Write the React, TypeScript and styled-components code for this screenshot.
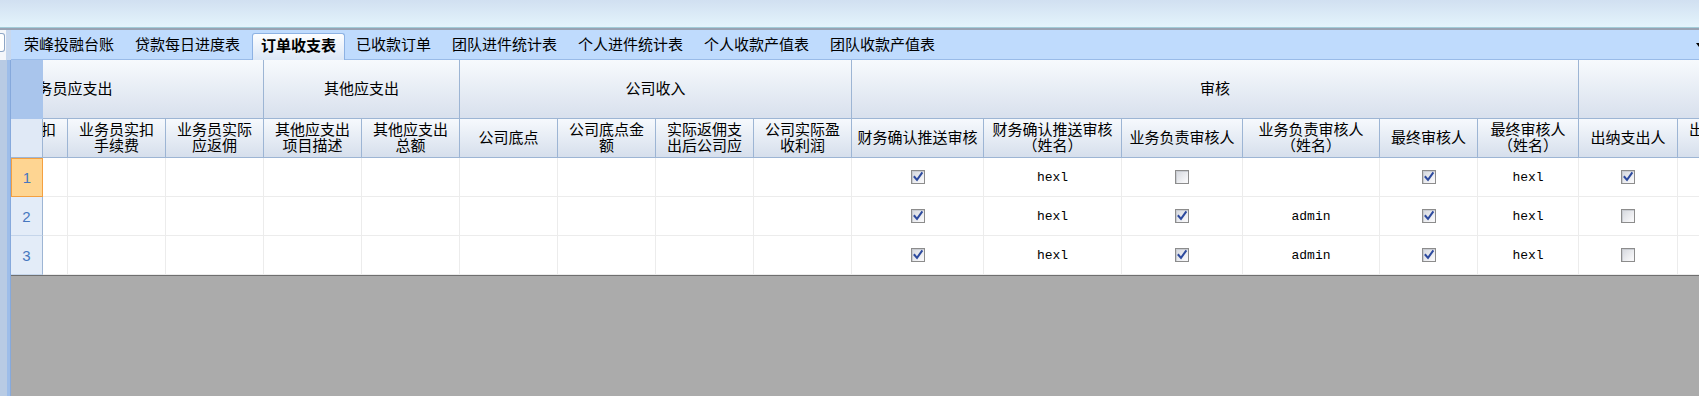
import * as React from 'react';
import styled, { createGlobalStyle } from 'styled-components';

const GlobalStyle = createGlobalStyle`
  html, body { margin: 0; padding: 0; overflow: hidden; }
  body {
    font-family: "Noto Sans CJK SC", "Liberation Sans", sans-serif;
    font-size: 15px;
    color: #000;
  }
`;

type Col = { w: number; label: string[]; key?: string };
type Group = { label: string; from: number; to: number };
type RowData = Record<string, boolean | string>;

const COLS: Col[] = [
  { w: 98, label: ['业务员应收', '手续费'] },
  { w: 98, label: ['业务员应扣', '手续费'] },
  { w: 98, label: ['业务员实扣', '手续费'] },
  { w: 98, label: ['业务员实际', '应返佣'] },
  { w: 98, label: ['其他应支出', '项目描述'] },
  { w: 98, label: ['其他应支出', '总额'] },
  { w: 98, label: ['公司底点'] },
  { w: 98, label: ['公司底点金', '额'] },
  { w: 98, label: ['实际返佣支', '出后公司应'] },
  { w: 98, label: ['公司实际盈', '收利润'] },
  { w: 132, label: ['财务确认推送审核'], key: 'finCheck' },
  { w: 138, label: ['财务确认推送审核', '（姓名）'], key: 'finName' },
  { w: 121, label: ['业务负责审核人'], key: 'bizCheck' },
  { w: 137, label: ['业务负责审核人', '（姓名）'], key: 'bizName' },
  { w: 98, label: ['最终审核人'], key: 'finalCheck' },
  { w: 101, label: ['最终审核人', '（姓名）'], key: 'finalName' },
  { w: 99, label: ['出纳支出人'], key: 'cashCheck' },
  { w: 98, label: ['出纳支出人', '（姓名）'], key: 'cashName' },
  { w: 98, label: ['出纳支出', '时间'] },
];

const GROUPS: Group[] = [
  { label: '业务员应支出', from: 0, to: 3 },
  { label: '其他应支出', from: 4, to: 5 },
  { label: '公司收入', from: 6, to: 9 },
  { label: '审核', from: 10, to: 15 },
  { label: '出纳', from: 16, to: 18 },
];

const ROWS: RowData[] = [
  { finCheck: true, finName: 'hexl', bizCheck: false, bizName: '', finalCheck: true, finalName: 'hexl', cashCheck: true },
  { finCheck: true, finName: 'hexl', bizCheck: true, bizName: 'admin', finalCheck: true, finalName: 'hexl', cashCheck: false },
  { finCheck: true, finName: 'hexl', bizCheck: true, bizName: 'admin', finalCheck: true, finalName: 'hexl', cashCheck: false },
];

const TABS = ['荣峰投融台账', '贷款每日进度表', '订单收支表', '已收款订单', '团队进件统计表', '个人进件统计表', '个人收款产值表', '团队收款产值表'];
const ACTIVE_TAB = 2;

const Page = styled.div`
  display: flex;
  flex-direction: column;
  width: 1699px;
  height: 396px;
  overflow: hidden;
`;

const TopBand = styled.div`
  flex: none;
  height: 27px;
  background: linear-gradient(to bottom, #d1e0f1, #e4f4fc);
  border-bottom: 1px solid #a2ccd8;
`;

const Body = styled.div`
  flex: 1;
  display: flex;
  min-height: 0;
  border-top: 2px solid #98a3b3;
`;

const LeftRail = styled.div`
  flex: none;
  width: 11px;
  display: flex;
  flex-direction: column;
`;

const RailTop = styled.div`
  height: 30px;
  background: linear-gradient(to right, #f4f6fa 0 6px, #c8d8ee 6px);
`;

const InputStub = styled.div`
  width: 5px;
  height: 19px;
  margin-top: 3px;
  box-sizing: border-box;
  background: #fff;
  border: 1px solid #8ea6c6;
  border-left: none;
  border-radius: 0 3px 3px 0;
`;

const RailBottom = styled.div`
  flex: 1;
  background: linear-gradient(to right, #b8cbe4 0 7px, #9dbde9 7px 10px, #86a9dc 10px 11px);
`;

const Main = styled.div`
  flex: 1;
  min-width: 0;
  display: flex;
  flex-direction: column;
`;

const TabStrip = styled.div`
  flex: none;
  height: 29px;
  display: flex;
  align-items: flex-end;
  gap: 1px;
  padding-left: 3px;
  background: #bfdbfd;
  border-bottom: 1px solid #99bbe8;
`;

const Tab = styled.div<{ $active?: boolean }>`
  position: relative;
  display: flex;
  align-items: center;
  box-sizing: border-box;
  padding: 0 10px;
  height: ${p => (p.$active ? '27px' : '29px')};
  white-space: nowrap;
  line-height: 16px;
  ${p =>
    p.$active
      ? `
    font-weight: bold;
    margin: 0 0 -1px 1px;
    padding: 0 8px 5px;
    background: linear-gradient(to bottom, #fdfeff, #dbe7f6);
    border: 1px solid #8db2e3;
    border-bottom: none;
    border-radius: 3px 3px 0 0;
  `
      : 'padding-bottom: 1px;'}
`;

const DropArrow = styled.div`
  align-self: center;
  margin-left: auto;
  margin-right: -3px;
  width: 0;
  height: 0;
  border-left: 3px solid transparent;
  border-right: 3px solid transparent;
  border-top: 4px solid #000;
`;

const Grid = styled.div`
  flex: none;
  display: flex;
`;

const FrozenCol = styled.div`
  flex: none;
  width: 32px;
  display: flex;
  flex-direction: column;
`;

const CornerTop = styled.div`
  height: 59px;
  background: #a9c5ec;
`;

const CornerSub = styled.div`
  height: 39px;
  box-sizing: border-box;
  background: #e0e9f6;
  border-right: 1px solid #9db5d4;
  border-bottom: 1px solid #9db5d4;
`;

const RowNum = styled.div<{ $current?: boolean }>`
  height: 39px;
  box-sizing: border-box;
  display: flex;
  align-items: center;
  justify-content: center;
  font-family: "Liberation Sans", sans-serif;
  font-size: 15px;
  color: #4677bf;
  background: ${p => (p.$current ? '#fed592' : '#e3ecf8')};
  border: ${p => (p.$current ? '1px solid #f4a040' : 'none')};
  border-right: 1px solid ${p => (p.$current ? '#f4a040' : '#9db5d4')};
  border-bottom: 1px solid ${p => (p.$current ? '#f4a040' : '#c5d5ea')};
`;

const ScrollPane = styled.div`
  flex: 1;
  min-width: 0;
  overflow: hidden;
`;

// grid is scrolled horizontally: the first column and most of the second are off to the left
const ScrollContent = styled.div`
  margin-left: -171px;
  width: max-content;
`;

const Row = styled.div`
  display: flex;
`;

const GroupCell = styled.div<{ $w: number }>`
  flex: none;
  width: ${p => p.$w}px;
  height: 59px;
  box-sizing: border-box;
  display: flex;
  align-items: center;
  justify-content: center;
  padding-bottom: 3px;
  background: linear-gradient(to bottom, #f7fafd, #d8e0ed);
  border-right: 1px solid #9db5d4;
  border-bottom: 1px solid #9db5d4;
  white-space: nowrap;
`;

const HeadCell = styled.div<{ $w: number }>`
  flex: none;
  width: ${p => p.$w}px;
  height: 39px;
  box-sizing: border-box;
  display: flex;
  flex-direction: column;
  align-items: center;
  justify-content: center;
  padding-bottom: 2px;
  line-height: 16px;
  background: linear-gradient(to bottom, #f6f9fd, #d6dfec);
  border-right: 1px solid #9db5d4;
  border-bottom: 1px solid #9db5d4;
  white-space: nowrap;
`;

const DataCell = styled.div<{ $w: number }>`
  flex: none;
  width: ${p => p.$w}px;
  height: 39px;
  box-sizing: border-box;
  display: flex;
  align-items: center;
  justify-content: center;
  font-family: "Liberation Mono", monospace;
  font-size: 13px;
  background: #fff;
  border-right: 1px solid #ececec;
  border-bottom: 1px solid #ececec;
`;

const CheckBox = styled.span`
  width: 14px;
  height: 14px;
  box-sizing: border-box;
  display: flex;
  align-items: center;
  justify-content: center;
  border: 1px solid #8c8c8c;
  background: linear-gradient(135deg, #d4d7dd, #f7f7f9 85%);
  box-shadow: inset 1px 1px 0 #c9ccd2;
`;

const GrayArea = styled.div`
  flex: 1;
  background: #ababab;
  border-top: 1px solid #6f6f6f;
`;

function Check({ checked }: { checked: boolean }) {
  return (
    <CheckBox>
      {checked && (
        <svg width="12" height="12" viewBox="0 0 12 12">
          <path d="M2.5 6 L5 8.8 L9.8 2.2" fill="none" stroke="#2d4a9e" strokeWidth="2" strokeLinecap="square" />
        </svg>
      )}
    </CheckBox>
  );
}

const groupWidth = (g: Group) => COLS.slice(g.from, g.to + 1).reduce((s, c) => s + c.w, 0);

export default function App() {
  return (
    <Page>
      <GlobalStyle />
      <TopBand />
      <Body>
        <LeftRail>
          <RailTop>
            <InputStub />
          </RailTop>
          <RailBottom />
        </LeftRail>
        <Main>
          <TabStrip>
            {TABS.map((t, i) => (
              <Tab key={t} $active={i === ACTIVE_TAB}>{t}</Tab>
            ))}
            <DropArrow />
          </TabStrip>
          <Grid>
            <FrozenCol>
              <CornerTop />
              <CornerSub />
              {ROWS.map((_, i) => (
                <RowNum key={i} $current={i === 0}>{i + 1}</RowNum>
              ))}
            </FrozenCol>
            <ScrollPane>
              <ScrollContent>
                <Row>
                  {GROUPS.map(g => (
                    <GroupCell key={g.label} $w={groupWidth(g)}>{g.label}</GroupCell>
                  ))}
                </Row>
                <Row>
                  {COLS.map((c, i) => (
                    <HeadCell key={i} $w={c.w}>
                      {c.label.map(l => <span key={l}>{l}</span>)}
                    </HeadCell>
                  ))}
                </Row>
                {ROWS.map((r, ri) => (
                  <Row key={ri}>
                    {COLS.map((c, ci) => {
                      const v = c.key ? r[c.key] : undefined;
                      return (
                        <DataCell key={ci} $w={c.w}>
                          {typeof v === 'boolean' ? <Check checked={v} /> : v}
                        </DataCell>
                      );
                    })}
                  </Row>
                ))}
              </ScrollContent>
            </ScrollPane>
          </Grid>
          <GrayArea />
        </Main>
      </Body>
    </Page>
  );
}
